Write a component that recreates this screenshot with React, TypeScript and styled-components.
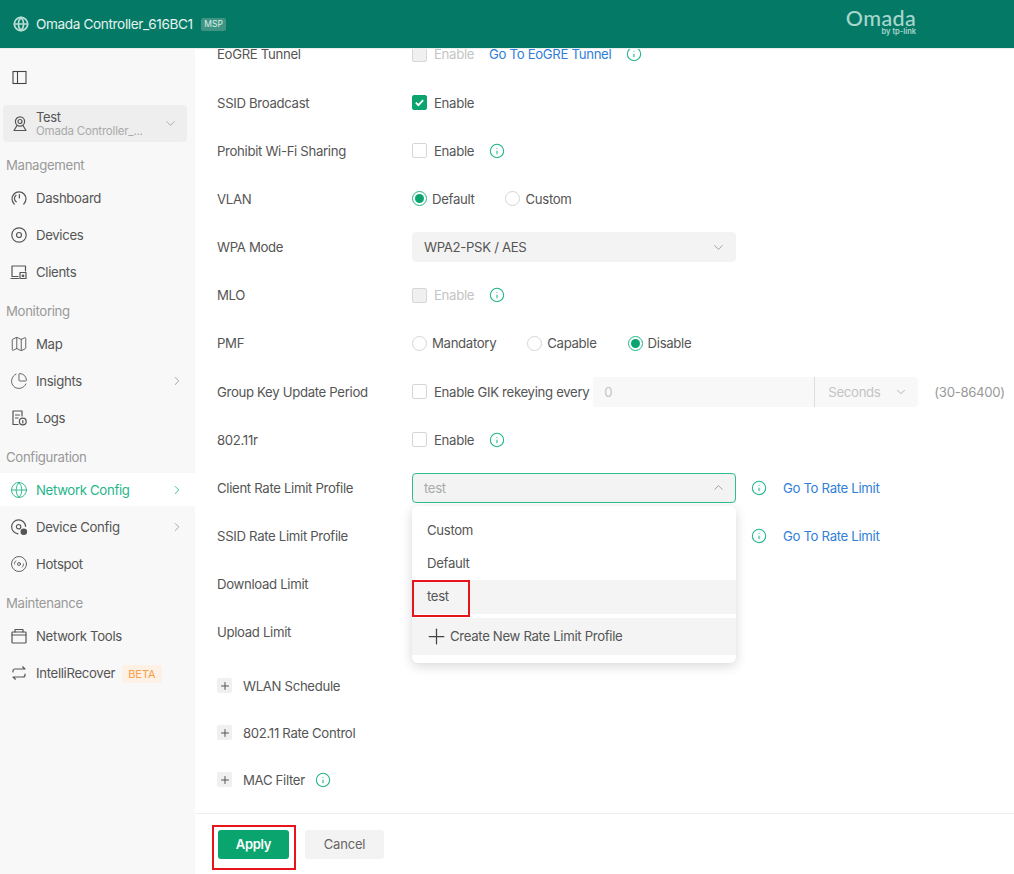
import { FC, ReactNode } from 'react';
import styled, { createGlobalStyle } from 'styled-components';
import { ChevronDown, ChevronRight, ChevronUp, ChartPie, Disc3, Globe, Map as MapIcon, Plus, Info } from 'lucide-react';

const GlobalStyle = createGlobalStyle`
html, body { margin:0; padding:0; height:100%; overflow:hidden; }
body { font-family:"Inter","Noto Sans",sans-serif; font-size:13.2px; letter-spacing:-0.33px; color:#555; background:#fff; white-space:nowrap; }
#root { height:100%; }
`;

const Page = styled.div`
display:flex;
flex-direction:column;
height:874px;
`;

const Header = styled.header`
flex:none;
height:49px;
box-sizing:border-box;
background:#047a66;
border-bottom:1px solid #e9eeec;
display:flex;
align-items:center;
color:#e4f3ef;
padding-left:13px;
position:relative;
`;

const HeaderTitle = styled.span`
font-size:13.6px;
margin-left:7px;
letter-spacing:-0.37px;
`;

const MspBadge = styled.span`
font-size:8.5px;
line-height:13px;
letter-spacing:0;
padding:0 3.5px;
margin-left:8px;
border-radius:2px;
background:#3f9483;
color:#dcefea;
`;

const Logo = styled.div`
margin-left:auto;
margin-right:98px;
display:flex;
flex-direction:column;
align-items:flex-end;
color:#a9d6cc;
margin-top:-3px;
`;

const LogoName = styled.span`
font-family:"Lato",sans-serif;
font-size:21.5px;
font-weight:500;
line-height:19px;
letter-spacing:.35px;
`;

const LogoSub = styled.span`
font-size:7.5px;
line-height:8px;
font-weight:600;
letter-spacing:0;
`;

const Body = styled.div`
flex:1;
display:flex;
min-height:0;
`;

const Sidebar = styled.aside`
flex:none;
width:195px;
background:#f8f8f8;
`;

const Toggle = styled.div`
height:56px;
padding-left:12px;
display:flex;
align-items:center;
color:#444;
`;

const SiteSelect = styled.div`
height:37px;
margin:0 8px 0 3px;
background:#eee;
border-radius:4px;
display:flex;
align-items:center;
padding-left:8px;
color:#555;
`;

const SiteText = styled.div`
margin-left:7px;
flex:1;
display:flex;
flex-direction:column;
`;

const SiteName = styled.span`
font-size:13px;
line-height:14px;
`;

const SiteSub = styled.span`
font-size:11.5px;
line-height:14px;
letter-spacing:-0.2px;
color:#aaa;
`;

const SiteArrow = styled.span`
display:flex;
color:#999;
margin-right:9px;
`;

const MenuGroup = styled.div`
display:flex;
flex-direction:column;
`;

const SectionLabel = styled.div`
height:27px;
line-height:27px;
padding-left:6px;
color:#999;
margin-top:8px;
`;

const FirstLabel = styled(SectionLabel)`
margin-top:10px;
`;

const Item = styled.div<{ $active?: boolean }>`
height:33px;
margin:2px 0;
display:flex;
align-items:center;
padding-left:10px;
background:${(p) => (p.$active ? '#fff' : 'transparent')};
color:${(p) => (p.$active ? '#1fb58a' : '#555')};
`;

const ItemLabel = styled.span`
margin-left:8px;
flex:none;
`;

const ItemArrow = styled.span<{ $active?: boolean }>`
margin-left:auto;
margin-right:11px;
display:flex;
color:${(p) => (p.$active ? '#1fb58a' : '#999')};
`;

const BetaBadge = styled.span`
margin-left:7px;
font-size:11px;
line-height:18px;
letter-spacing:0;
margin-top:3px;
padding:0 6px;
border-radius:3px;
background:#fdf1e6;
color:#f7a04b;
`;

const Main = styled.main`
flex:1;
min-width:0;
display:flex;
flex-direction:column;
`;

const Scroller = styled.div`
flex:1;
min-height:0;
overflow:hidden;
padding-left:22px;
`;

const Form = styled.div`
margin-top:-18.6px;
`;

const Row = styled.div`
height:48.17px;
display:flex;
align-items:center;
`;

const Label = styled.div`
flex:none;
width:195px;
`;

const Control = styled.div<{ $indent?: number }>`
display:flex;
align-items:center;
position:relative;
padding-left:${(p) => p.$indent ?? 0}px;
`;

const Box = styled.span<{ $checked?: boolean; $disabled?: boolean }>`
box-sizing:border-box;
width:15px;
height:15px;
border-radius:2px;
display:flex;
align-items:center;
justify-content:center;
border:1px solid ${(p) => (p.$checked ? '#0aa56f' : '#d6d6d6')};
background:${(p) => (p.$checked ? '#0aa56f' : p.$disabled ? '#f0f0f0' : '#fff')};
`;

const OptionText = styled.span<{ $disabled?: boolean }>`
margin-left:7px;
color:${(p) => (p.$disabled ? '#c4c4c4' : '#555')};
`;

const RadioDot = styled.span<{ $on?: boolean }>`
box-sizing:border-box;
width:15px;
height:15px;
border-radius:50%;
display:flex;
align-items:center;
justify-content:center;
border:1px solid ${(p) => (p.$on ? '#1fb58a' : '#d6d6d6')};
&::after {
    content:"";
    width:9px;
    height:9px;
    border-radius:50%;
    background:${(p) => (p.$on ? '#0aa56f' : 'transparent')};
}
`;

const RadioWrap = styled.span`
display:flex;
align-items:center;
margin-right:31px;
& > span:last-child { margin-left:5px; color:#555; }
`;

const Link = styled.a<{ $left?: number }>`
color:#2f80d8;
margin-left:${(p) => p.$left ?? 16}px;
`;

const Tip = styled.span<{ $left?: number }>`
display:flex;
color:#1fb58a;
margin-left:${(p) => p.$left ?? 15}px;
`;

const Select = styled.div<{ $open?: boolean }>`
box-sizing:border-box;
width:324px;
height:30px;
background:#f3f3f3;
border-radius:4px;
border:1px solid ${(p) => (p.$open ? '#2dbd90' : '#f3f3f3')};
display:flex;
align-items:center;
justify-content:space-between;
padding:0 9px 0 11px;
color:${(p) => (p.$open ? '#aaa' : '#555')};
& > svg { color:#888; }
`;

const DisabledInput = styled.div`
box-sizing:border-box;
margin-left:4px;
width:222px;
height:30px;
background:#f8f8f8;
border-radius:4px 0 0 4px;
border-right:1px solid #ddd;
padding-left:11px;
line-height:30px;
color:#c4c4c4;
`;

const DisabledUnit = styled.div`
box-sizing:border-box;
width:103px;
height:30px;
background:#f8f8f8;
border-radius:0 4px 4px 0;
display:flex;
align-items:center;
justify-content:space-between;
padding:0 10px 0 13px;
color:#c4c4c4;
& > svg { color:#999; }
`;

const Range = styled.span`
margin-left:16px;
color:#999;
`;

const Dropdown = styled.div`
position:absolute;
z-index:5;
left:0;
top:33px;
width:324px;
height:157px;
background:#fff;
border-radius:6px;
box-shadow:0 3px 12px rgba(0,0,0,.16);
padding-top:8px;
box-sizing:border-box;
`;

const DropItem = styled.div<{ $hover?: boolean }>`
height:33.3px;
line-height:33.3px;
padding-left:15px;
background:${(p) => (p.$hover ? '#f4f4f4' : 'transparent')};
`;

const CreateItem = styled.div`
margin-top:4px;
height:37px;
background:#f4f4f4;
display:flex;
align-items:center;
padding-left:12px;
& > svg { margin-right:1px; color:#444; }
`;

const Highlight = styled.div`
position:absolute;
box-sizing:border-box;
border:2px solid #e8141c;
pointer-events:none;
`;

const TestMark = styled(Highlight)`
left:0;
top:74px;
width:58px;
height:37px;
`;

const Collapse = styled.div<{ $top?: number }>`
height:47px;
margin-top:${(p) => p.$top ?? 0}px;
display:flex;
align-items:center;
`;

const Expander = styled.span`
width:15px;
height:15px;
border-radius:2px;
background:#f0f0f0;
display:flex;
align-items:center;
justify-content:center;
margin-right:11px;
color:#555;
`;

const Footer = styled.footer`
flex:none;
box-sizing:border-box;
height:61px;
border-top:1px solid #eee;
display:flex;
align-items:center;
padding:0 0 0 23px;
gap:16px;
position:relative;
`;

const ApplyButton = styled.button`
width:71px;
height:29px;
border:0;
border-radius:3px;
background:#0aa56f;
color:#fff;
font:600 13px "Inter",sans-serif;
letter-spacing:-0.3px;
`;

const CancelButton = styled.button`
width:79px;
height:29px;
border:0;
border-radius:3px;
background:#f3f3f3;
color:#666;
font:13px "Inter",sans-serif;
letter-spacing:-0.2px;
`;

const ApplyMark = styled(Highlight)`
left:17px;
top:11px;
width:84px;
height:45px;
`;

const Ico: FC<{ children: ReactNode }> = ({ children }) => (
    <svg width={18} height={18} viewBox="0 0 18 18" fill="none" stroke="currentColor" strokeWidth="1.2" strokeLinecap="round" strokeLinejoin="round">
        {children}
    </svg>
);

const MenuIcons: Record<string, ReactNode> = {
    dashboard: <Ico><path d="M4.2 15A7 7 0 1 1 13.8 15" /><path d="M6.2 12.8A4 4 0 0 1 6 6.3" /><path d="M9.4 5.5v3.5" /></Ico>,
    devices: <Ico><circle cx="9" cy="9" r="7.2" /><circle cx="9" cy="9" r="2.5" /></Ico>,
    clients: <Ico><path d="M8 13.5H2V3h13.5v5" /><path d="M1 15.5h7.5" /><rect x="10" y="9.5" width="6" height="6" /><circle cx="13" cy="12.8" r=".8" /></Ico>,
    map: <MapIcon size={18} strokeWidth={1.2} />,
    insights: <ChartPie size={18} strokeWidth={1.2} />,
    logs: <Ico><path d="M8 15.5H3V2h9v5" /><path d="M5.5 6h4M5.5 9h2.5" /><circle cx="12.8" cy="12.5" r="3.4" /><path d="M12.8 11.5v2.4" /></Ico>,
    network: <Globe size={18} strokeWidth={1.2} />,
    device: <Ico><path d="M8 15.8a7 7 0 1 1 7.6-7.4" /><circle cx="8.6" cy="8.7" r="2.2" /><circle cx="13.8" cy="13.8" r="2.7" fill="currentColor" /></Ico>,
    hotspot: <Disc3 size={18} strokeWidth={1.2} />,
    tools: <Ico><rect x="2" y="5" width="14" height="11" rx=".8" /><path d="M5 5V2.5h8V5" /><path d="M2 8h14" /></Ico>,
    recover: <Ico><path d="M3 8V7a2 2 0 0 1 2-2h10l-2.4-2.2" /><path d="M15 10v1a2 2 0 0 1-2 2H3l2.4 2.2" /></Ico>,
};

type MenuEntry = { icon: string; label: string; arrow?: boolean; active?: boolean; beta?: boolean };

const menu: { title: string; items: MenuEntry[] }[] = [
    { title: 'Management', items: [
        { icon: 'dashboard', label: 'Dashboard' },
        { icon: 'devices', label: 'Devices' },
        { icon: 'clients', label: 'Clients' },
    ] },
    { title: 'Monitoring', items: [
        { icon: 'map', label: 'Map' },
        { icon: 'insights', label: 'Insights', arrow: true },
        { icon: 'logs', label: 'Logs' },
    ] },
    { title: 'Configuration', items: [
        { icon: 'network', label: 'Network Config', arrow: true, active: true },
        { icon: 'device', label: 'Device Config', arrow: true },
        { icon: 'hotspot', label: 'Hotspot' },
    ] },
    { title: 'Maintenance', items: [
        { icon: 'tools', label: 'Network Tools' },
        { icon: 'recover', label: 'IntelliRecover', beta: true },
    ] },
];

const InfoTip: FC<{ left?: number }> = ({ left }) => (
    <Tip $left={left}><Info size={16} strokeWidth={1.6} /></Tip>
);

const Check: FC<{ label: string; checked?: boolean; disabled?: boolean }> = ({ label, checked, disabled }) => (
    <>
        <Box $checked={checked} $disabled={disabled}>
            {checked && <svg width="11" height="11" viewBox="0 0 12 12" fill="none" stroke="#fff" strokeWidth="2"><path d="M2 6.2l2.8 2.8L10 3.5" /></svg>}
        </Box>
        <OptionText $disabled={disabled}>{label}</OptionText>
    </>
);

const Radio: FC<{ label: string; on?: boolean }> = ({ label, on }) => (
    <RadioWrap><RadioDot $on={on} /><span>{label}</span></RadioWrap>
);

const App: FC = () => {
    return (
        <Page>
            <GlobalStyle />
            <Header>
                <Globe size={16} strokeWidth={2.6} color="#b7ddd4" />
                <HeaderTitle>Omada Controller_616BC1</HeaderTitle>
                <MspBadge>MSP</MspBadge>
                <Logo>
                    <LogoName>Omada</LogoName>
                    <LogoSub>by tp-link</LogoSub>
                </Logo>
            </Header>
            <Body>
                <Sidebar>
                    <Toggle>
                        <svg width="15" height="15" viewBox="0 0 15 15" fill="none" stroke="currentColor" strokeWidth="1.1"><rect x="1" y="1.5" width="13" height="12" /><path d="M5.5 1.5v12" /></svg>
                    </Toggle>
                    <SiteSelect>
                        <Ico><circle cx="9" cy="6.5" r="4.6" /><circle cx="9" cy="6.5" r="2" /><path d="M6 10.5L3 15.5h12l-3-5" /></Ico>
                        <SiteText>
                            <SiteName>Test</SiteName>
                            <SiteSub>Omada Controller_...</SiteSub>
                        </SiteText>
                        <SiteArrow><ChevronDown size={15} strokeWidth={1.2} /></SiteArrow>
                    </SiteSelect>
                    {menu.map((group, i) => {
                        const Title = i === 0 ? FirstLabel : SectionLabel;
                        return (
                            <MenuGroup key={group.title}>
                                <Title>{group.title}</Title>
                                {group.items.map((item) => (
                                    <Item key={item.label} $active={item.active}>
                                        {MenuIcons[item.icon]}
                                        <ItemLabel>{item.label}</ItemLabel>
                                        {item.beta && <BetaBadge>BETA</BetaBadge>}
                                        {item.arrow && <ItemArrow $active={item.active}><ChevronRight size={14} strokeWidth={1.5} /></ItemArrow>}
                                    </Item>
                                ))}
                            </MenuGroup>
                        );
                    })}
                </Sidebar>
                <Main>
                    <Scroller>
                        <Form>
                            <Row>
                                <Label>EoGRE Tunnel</Label>
                                <Control>
                                    <Check label="Enable" disabled />
                                    <Link $left={15}>Go To EoGRE Tunnel</Link>
                                    <InfoTip />
                                </Control>
                            </Row>
                            <Row>
                                <Label>SSID Broadcast</Label>
                                <Control><Check label="Enable" checked /></Control>
                            </Row>
                            <Row>
                                <Label>Prohibit Wi-Fi Sharing</Label>
                                <Control><Check label="Enable" /><InfoTip /></Control>
                            </Row>
                            <Row>
                                <Label>VLAN</Label>
                                <Control><Radio label="Default" on /><Radio label="Custom" /></Control>
                            </Row>
                            <Row>
                                <Label>WPA Mode</Label>
                                <Control><Select>WPA2-PSK / AES<ChevronDown size={15} strokeWidth={1.2} /></Select></Control>
                            </Row>
                            <Row>
                                <Label>MLO</Label>
                                <Control><Check label="Enable" disabled /><InfoTip /></Control>
                            </Row>
                            <Row>
                                <Label>PMF</Label>
                                <Control><Radio label="Mandatory" /><Radio label="Capable" /><Radio label="Disable" on /></Control>
                            </Row>
                            <Row>
                                <Label>Group Key Update Period</Label>
                                <Control>
                                    <Check label="Enable GIK rekeying every" />
                                    <DisabledInput>0</DisabledInput>
                                    <DisabledUnit>Seconds<ChevronDown size={14} strokeWidth={1.2} /></DisabledUnit>
                                    <Range>(30-86400)</Range>
                                </Control>
                            </Row>
                            <Row>
                                <Label>802.11r</Label>
                                <Control><Check label="Enable" /><InfoTip /></Control>
                            </Row>
                            <Row>
                                <Label>Client Rate Limit Profile</Label>
                                <Control>
                                    <Select $open>test<ChevronUp size={15} strokeWidth={1.2} /></Select>
                                    <InfoTip />
                                    <Link>Go To Rate Limit</Link>
                                    <Dropdown>
                                        <DropItem>Custom</DropItem>
                                        <DropItem>Default</DropItem>
                                        <DropItem $hover>test</DropItem>
                                        <CreateItem><Plus size={25} strokeWidth={1.2} />Create New Rate Limit Profile</CreateItem>
                                        <TestMark />
                                    </Dropdown>
                                </Control>
                            </Row>
                            <Row>
                                <Label>SSID Rate Limit Profile</Label>
                                <Control $indent={324}>
                                    <InfoTip />
                                    <Link>Go To Rate Limit</Link>
                                </Control>
                            </Row>
                            <Row><Label>Download Limit</Label></Row>
                            <Row><Label>Upload Limit</Label></Row>
                            <Collapse $top={6}><Expander><Plus size={12} strokeWidth={2} /></Expander>WLAN Schedule</Collapse>
                            <Collapse><Expander><Plus size={12} strokeWidth={2} /></Expander>802.11 Rate Control</Collapse>
                            <Collapse><Expander><Plus size={12} strokeWidth={2} /></Expander>MAC Filter<InfoTip left={10} /></Collapse>
                        </Form>
                    </Scroller>
                    <Footer>
                        <ApplyButton>Apply</ApplyButton>
                        <CancelButton>Cancel</CancelButton>
                        <ApplyMark />
                    </Footer>
                </Main>
            </Body>
        </Page>
    );
};

export default App;
